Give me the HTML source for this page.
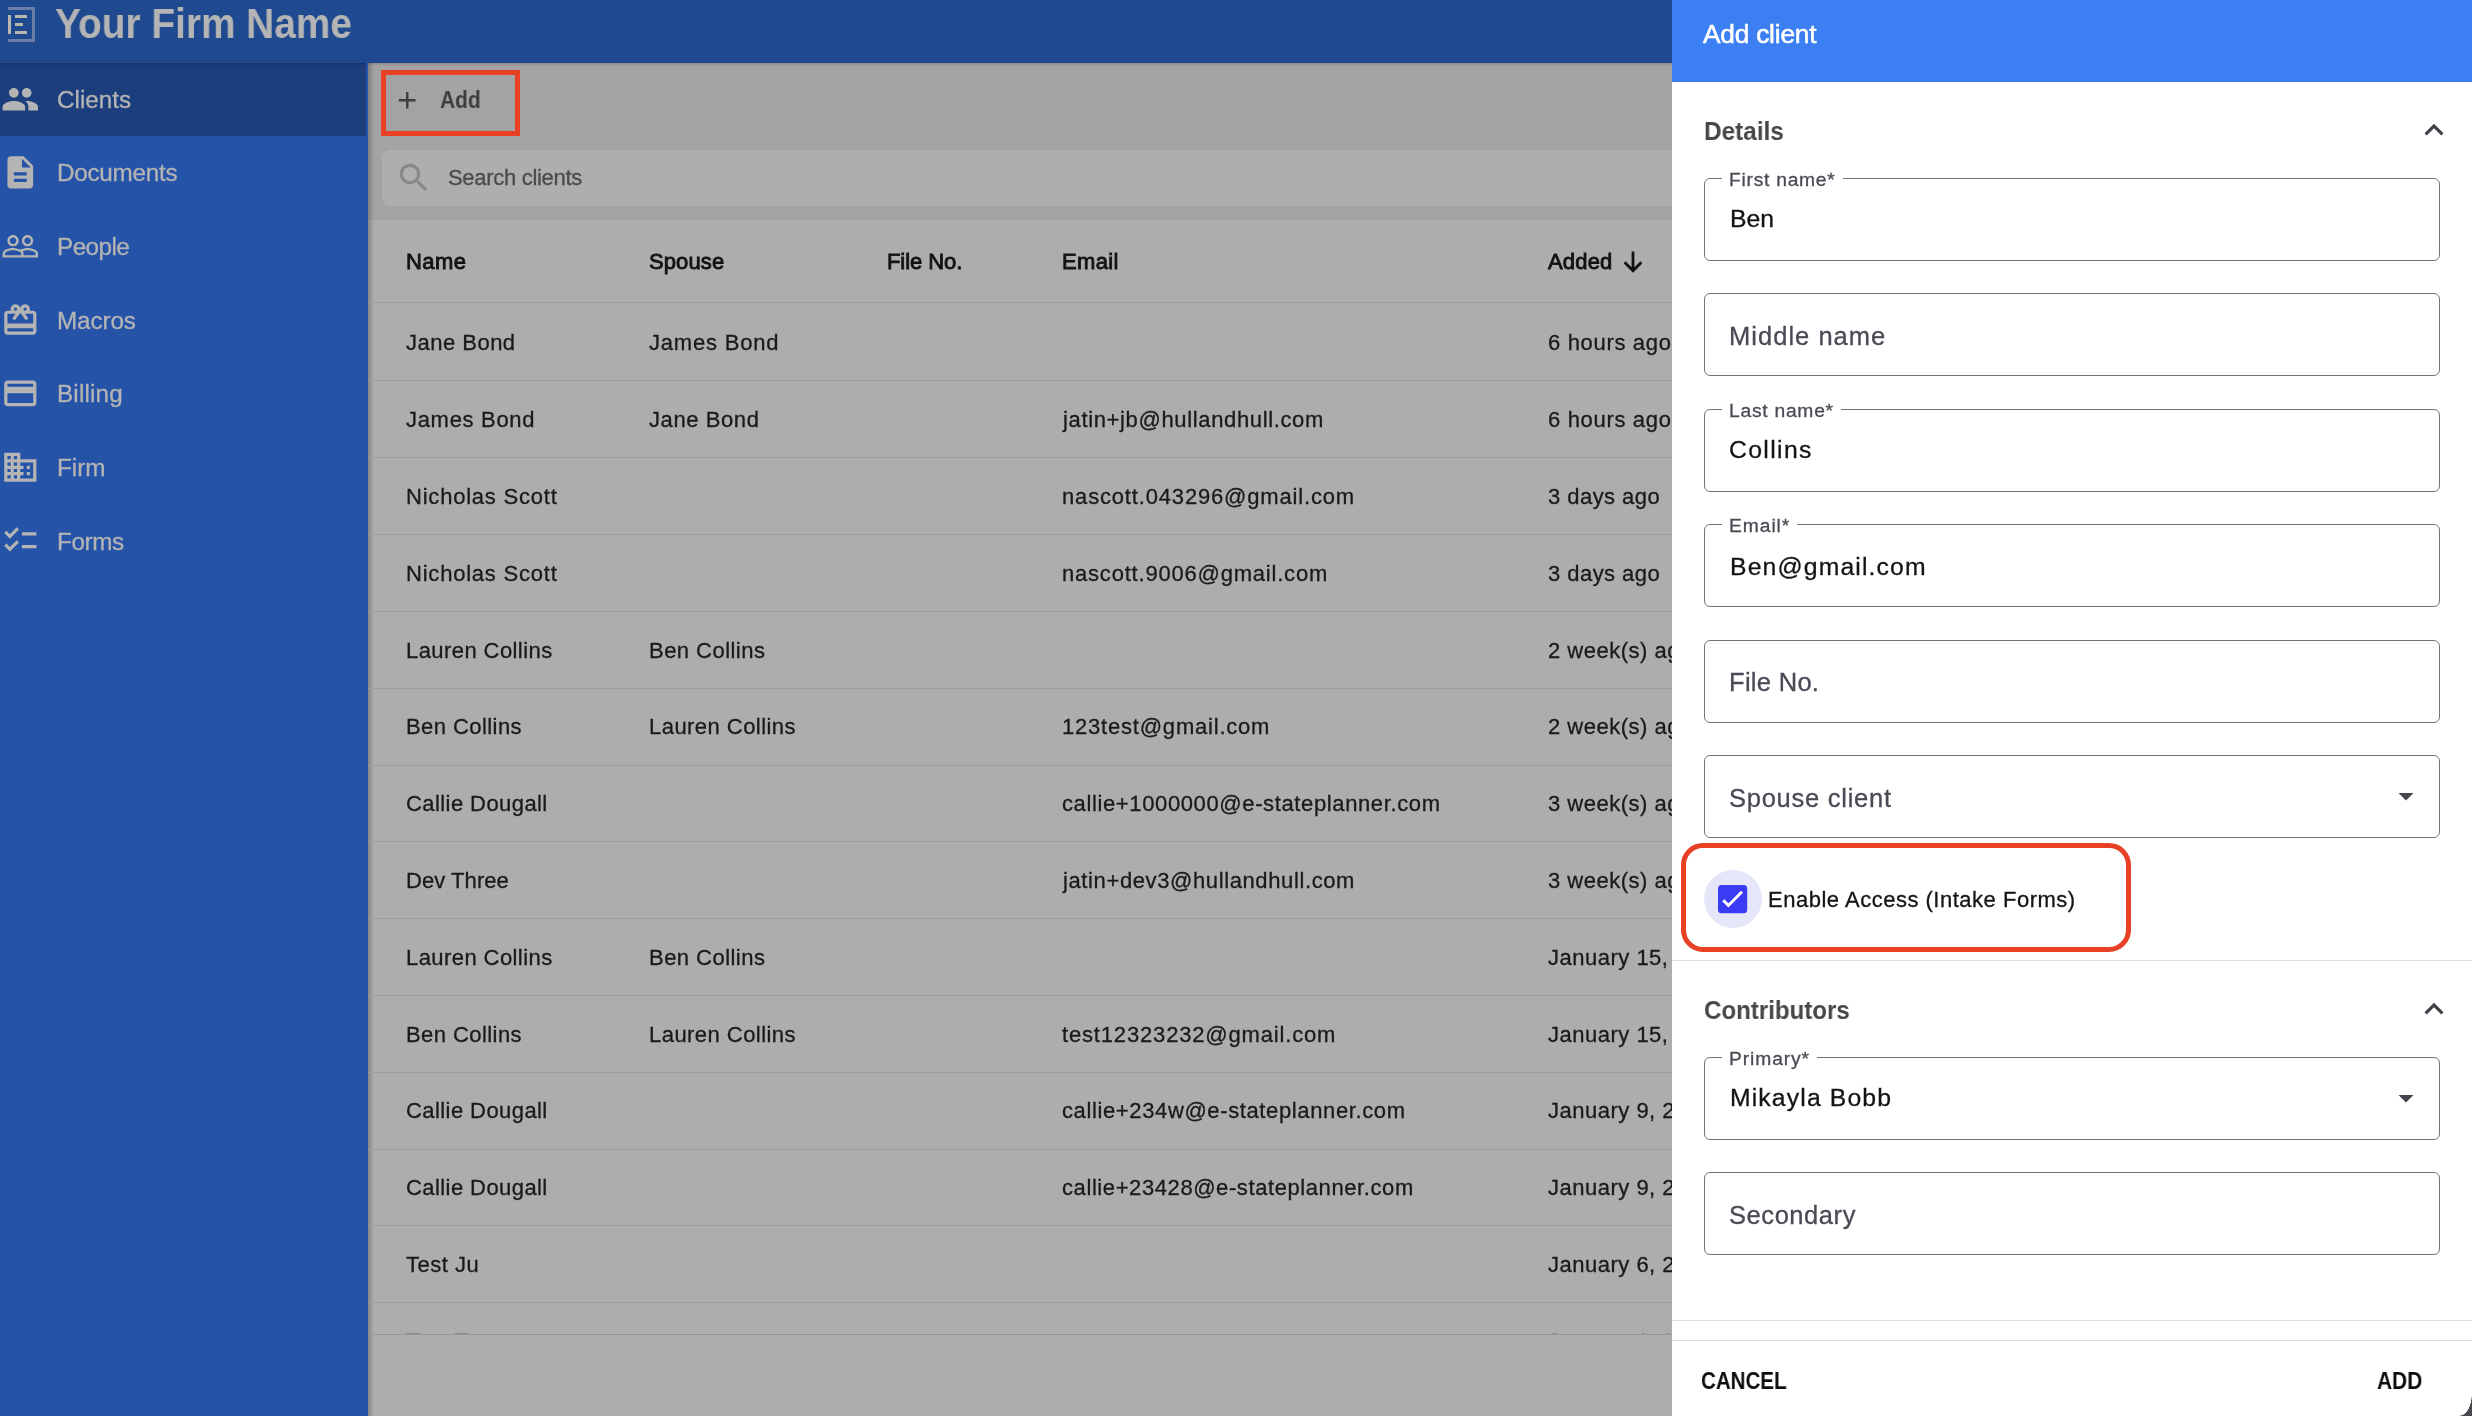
<!DOCTYPE html>
<html><head><meta charset="utf-8">
<style>
*{box-sizing:border-box;margin:0;padding:0}
html,body{width:2472px;height:1416px;overflow:hidden;background:#adadad;font-family:"Liberation Sans",sans-serif}
.a{position:absolute}
.t{position:absolute;white-space:nowrap;line-height:1;will-change:transform}
svg{position:absolute;display:block}
.fld{position:absolute;left:1704px;width:736px;height:83px;border:1px solid #76757f;border-radius:6px}
.gap{position:absolute;height:3px;background:#fff}
.rl{position:absolute;left:368px;width:1304px;height:1px;background:#9d9d9d}
</style></head><body>

<div class="a" style="left:0;top:0;width:1672px;height:63px;background:#1f4a8f"></div>
<div class="a" style="left:0;top:63px;width:368px;height:1353px;background:#2553a8"></div>
<div class="a" style="left:0;top:63px;width:368px;height:73px;background:#1c3e7d"></div>
<div class="a" style="left:368px;top:63px;width:1304px;height:157px;background:#a3a3a3"></div>
<div class="a" style="left:382px;top:150px;width:1290px;height:56px;background:#aeaeae;border-radius:8px 0 0 8px"></div>
<div class="a" style="left:368px;top:63px;width:6px;height:1353px;background:linear-gradient(to right,rgba(0,0,0,0.22),rgba(0,0,0,0))"></div>
<div class="a" style="left:368px;top:63px;width:1304px;height:3px;background:linear-gradient(to bottom,rgba(0,0,0,0.15),rgba(0,0,0,0))"></div>
<div class="a" style="left:0;top:63px;width:368px;height:3px;background:linear-gradient(to bottom,rgba(0,0,0,0.18),rgba(0,0,0,0))"></div>
<div class="a" style="left:366px;top:63px;width:2px;height:1353px;background:#2553a8"></div>
<div class="a" style="left:8px;top:7px;width:27px;height:3px;background:#6b7ea6"></div>
<div class="a" style="left:32px;top:7px;width:3px;height:35px;background:#6b7ea6"></div>
<div class="a" style="left:8px;top:39px;width:27px;height:3px;background:#6b7ea6"></div>
<div class="a" style="left:8px;top:15px;width:3px;height:19px;background:#b9b6b0"></div>
<div class="a" style="left:15px;top:15px;width:12px;height:3px;background:#b9b6b0"></div>
<div class="a" style="left:15px;top:23px;width:8px;height:3px;background:#b9b6b0"></div>
<div class="a" style="left:15px;top:31px;width:12px;height:3px;background:#b9b6b0"></div>
<div class="t" style="left:55.00px;top:2.30px;font-size:43.0px;font-weight:bold;color:#b4b4b4;letter-spacing:0.000px;transform:scaleX(0.9027);transform-origin:0px 0;">Your Firm Name</div>
<svg style="left:1.40px;top:79.55px" width="38.60" height="38.60" viewBox="0 0 24 24"><path fill="#b4b4b4" d="M16 11c1.66 0 2.99-1.34 2.99-3S17.66 5 16 5c-1.66 0-3 1.34-3 3s1.34 3 3 3zm-8 0c1.66 0 2.99-1.34 2.99-3S9.66 5 8 5C6.34 5 5 6.34 5 8s1.34 3 3 3zm0 2c-2.33 0-7 1.17-7 3.5V19h14v-2.5c0-2.33-4.67-3.5-7-3.5zm8 0c-.29 0-.62.02-.97.05 1.16.84 1.97 1.97 1.97 3.45V19h6v-2.5c0-2.33-4.670-3.5-7-3.5z"/></svg>
<div class="t" style="left:57.00px;top:87.67px;font-size:24.25px;color:#b4b4b4;letter-spacing:0.000px;-webkit-text-stroke:0.3px #b4b4b4;">Clients</div>
<svg style="left:1.40px;top:153.20px" width="38.60" height="38.60" viewBox="0 0 24 24"><path fill="#b4b4b4" d="M14 2H6c-1.1 0-1.99.9-1.99 2L4 20c0 1.1.89 2 1.99 2H18c1.1 0 2-.9 2-2V8l-6-6zm2 16H8v-2h8v2zm0-4H8v-2h8v2zm-3-5V3.5L18.5 9H13z"/></svg>
<div class="t" style="left:57.00px;top:161.32px;font-size:24.25px;color:#b4b4b4;letter-spacing:-0.250px;-webkit-text-stroke:0.3px #b4b4b4;">Documents</div>
<svg style="left:1.40px;top:226.85px" width="38.60" height="38.60" viewBox="0 0 24 24"><path fill="#b4b4b4" d="M16.5 13c-1.2 0-3.07.34-4.5 1-1.43-.67-3.3-1-4.5-1C5.33 13 1 14.08 1 16.25V19h22v-2.75c0-2.17-4.33-3.25-6.5-3.25zm-4 4.5h-10v-1.25c0-.54 2.560-1.75 5-1.75s5 1.21 5 1.75v1.25zm9 0H14v-1.25c0-.46-.2-.86-.52-1.22.88-.3 1.96-.53 3.02-.53 2.44 0 5 1.21 5 1.75v1.25zM7.5 12c1.93 0 3.5-1.57 3.5-3.5S9.43 5 7.5 5 4 6.57 4 8.5 5.57 12 7.5 12zm0-5.5c1.1 0 2 .9 2 2s-.9 2-2 2-2-.9-2-2 .9-2 2-2zm9 5.5c1.93 0 3.5-1.57 3.5-3.5S18.43 5 16.5 5 13 6.57 13 8.5s1.57 3.5 3.5 3.5zm0-5.5c1.1 0 2 .9 2 2s-.9 2-2 2-2-.9-2-2 .9-2 2-2z"/></svg>
<div class="t" style="left:57.00px;top:234.97px;font-size:24.25px;color:#b4b4b4;letter-spacing:-0.540px;-webkit-text-stroke:0.3px #b4b4b4;">People</div>
<svg style="left:1.40px;top:300.50px" width="38.60" height="38.60" viewBox="0 0 24 24"><path fill="#b4b4b4" d="M20 6h-2.18c.11-.31.18-.65.18-1 0-1.66-1.34-3-3-3-1.05 0-1.96.54-2.5 1.35l-.5.67-.5-.68C10.96 2.54 10.05 2 9 2 7.34 2 6 3.34 6 5c0 .35.07.69.18 1H4c-1.11 0-1.99.89-1.99 2L2 19c0 1.11.89 2 2 2h16c1.11 0 2-.89 2-2V8c0-1.11-.89-2-2-2zm-5-2c.55 0 1 .45 1 1s-.45 1-1 1-1-.45-1-1 .45-1 1-1zM9 4c.55 0 1 .45 1 1s-.45 1-1 1-1-.45-1-1 .45-1 1-1zm11 15H4v-2h16v2zm0-5H4V8h5.08L7 10.83 8.62 12 11 8.76l1-1.36 1 1.36L15.38 12 17 10.83 14.92 8H20v6z"/></svg>
<div class="t" style="left:57.00px;top:308.62px;font-size:24.25px;color:#b4b4b4;letter-spacing:-0.100px;-webkit-text-stroke:0.3px #b4b4b4;">Macros</div>
<svg style="left:1.40px;top:374.15px" width="38.60" height="38.60" viewBox="0 0 24 24"><path fill="#b4b4b4" d="M20 4H4c-1.11 0-1.99.89-1.99 2L2 18c0 1.11.89 2 2 2h16c1.11 0 2-.89 2-2V6c0-1.11-.89-2-2-2zm0 14H4v-6h16v6zm0-10H4V6h16v2z"/></svg>
<div class="t" style="left:57.00px;top:382.27px;font-size:24.25px;color:#b4b4b4;letter-spacing:0.167px;-webkit-text-stroke:0.3px #b4b4b4;">Billing</div>
<svg style="left:1.40px;top:447.80px" width="38.60" height="38.60" viewBox="0 0 24 24"><path fill="#b4b4b4" d="M12 7V3H2v18h20V7H12zM6 19H4v-2h2v2zm0-4H4v-2h2v2zm0-4H4V9h2v2zm0-4H4V5h2v2zm4 12H8v-2h2v2zm0-4H8v-2h2v2zm0-4H8V9h2v2zm0-4H8V5h2v2zm10 12h-8v-2h2v-2h-2v-2h2v-2h-2V9h8v10zm-2-8h-2v2h2v-2zm0 4h-2v2h2v-2z"/></svg>
<div class="t" style="left:57.00px;top:455.92px;font-size:24.25px;color:#b4b4b4;letter-spacing:-0.033px;-webkit-text-stroke:0.3px #b4b4b4;">Firm</div>
<svg style="left:1.40px;top:521.45px" width="38.60" height="38.60" viewBox="0 0 24 24"><path fill="#b4b4b4" d="M22 7h-9v2h9V7zm0 8h-9v2h9v-2zM5.540 11L2 7.46l1.41-1.41 2.12 2.12 4.24-4.24 1.41 1.41L5.54 11zm0 8L2 15.46l1.41-1.41 2.12 2.12 4.24-4.24 1.41 1.41L5.54 19z"/></svg>
<div class="t" style="left:57.00px;top:529.57px;font-size:24.25px;color:#b4b4b4;letter-spacing:-0.375px;-webkit-text-stroke:0.3px #b4b4b4;">Forms</div>
<svg style="left:392.6px;top:86.4px" width="28.5" height="28.5" viewBox="0 0 24 24"><path fill="#3d3d3d" d="M19 13h-6v6h-2v-6H5v-2h6V5h2v6h6v2z"/></svg>
<div class="t" style="left:440.00px;top:89.12px;font-size:23.25px;font-weight:bold;color:#3d3d3d;letter-spacing:0.000px;transform:scaleX(0.9000);transform-origin:0px 0;">Add</div>
<svg style="left:394.7px;top:158.9px" width="37.9" height="37.9" viewBox="0 0 24 24"><path fill="#888888" d="M15.5 14h-.79l-.28-.27C15.41 12.590 16 11.11 16 9.5 16 5.91 13.09 3 9.5 3S3 5.91 3 9.5 5.91 16 9.5 16c1.61 0 3.09-.59 4.23-1.57l.27.28v.79l5 4.99L20.49 19l-4.99-5zm-6 0C7.01 14 5 11.99 5 9.5S7.010 5 9.5 5 14 7.01 14 9.5 11.99 14 9.5 14z"/></svg>
<div class="t" style="left:448.40px;top:167.28px;font-size:22.0px;color:#4b4b4b;letter-spacing:-0.300px;-webkit-text-stroke:0.3px #4b4b4b;">Search clients</div>
<div class="t" style="left:405.80px;top:251.18px;font-size:22.0px;color:#121212;letter-spacing:0.400px;-webkit-text-stroke:0.85px #121212;">Name</div>
<div class="t" style="left:649.00px;top:251.18px;font-size:22.0px;color:#121212;letter-spacing:0.100px;-webkit-text-stroke:0.85px #121212;">Spouse</div>
<div class="t" style="left:886.90px;top:251.18px;font-size:22.0px;color:#121212;letter-spacing:-0.071px;-webkit-text-stroke:0.85px #121212;">File No.</div>
<div class="t" style="left:1061.70px;top:251.18px;font-size:22.0px;color:#121212;letter-spacing:0.325px;-webkit-text-stroke:0.85px #121212;">Email</div>
<div class="t" style="left:1548.20px;top:251.18px;font-size:22.0px;color:#121212;letter-spacing:0.175px;-webkit-text-stroke:0.85px #121212;">Added</div>
<svg style="left:1610px;top:240px" width="40" height="40" viewBox="1610 240 40 40"><path d="M1633 251.5 V269.5 M1624.6 262.3 L1633 270.7 L1641.4 262.3" fill="none" stroke="#121212" stroke-width="2.8"/></svg>
<div class="rl" style="top:302px"></div>
<div class="a" style="left:368px;top:303px;width:1304px;height:1031px;overflow:hidden">
<div class="t" style="left:38.00px;top:29.18px;font-size:22px;color:#1a1a1a;letter-spacing:0.487px;-webkit-text-stroke:0.3px #1a1a1a;">Jane Bond</div>
<div class="t" style="left:281.00px;top:29.18px;font-size:22px;color:#1a1a1a;letter-spacing:0.800px;-webkit-text-stroke:0.3px #1a1a1a;">James Bond</div>
<div class="t" style="left:1179.60px;top:29.18px;font-size:22px;color:#1a1a1a;letter-spacing:0.670px;-webkit-text-stroke:0.3px #1a1a1a;">6 hours ago</div>
<div class="a" style="left:0;top:77.3px;width:1304px;height:1px;background:#9d9d9d"></div>
<div class="t" style="left:38.00px;top:106.01px;font-size:22px;color:#1a1a1a;letter-spacing:0.689px;-webkit-text-stroke:0.3px #1a1a1a;">James Bond</div>
<div class="t" style="left:281.00px;top:106.01px;font-size:22px;color:#1a1a1a;letter-spacing:0.588px;-webkit-text-stroke:0.3px #1a1a1a;">Jane Bond</div>
<div class="t" style="left:695.00px;top:106.01px;font-size:22px;color:#1a1a1a;letter-spacing:0.643px;-webkit-text-stroke:0.3px #1a1a1a;">jatin+jb@hullandhull.com</div>
<div class="t" style="left:1179.60px;top:106.01px;font-size:22px;color:#1a1a1a;letter-spacing:0.670px;-webkit-text-stroke:0.3px #1a1a1a;">6 hours ago</div>
<div class="a" style="left:0;top:154.1px;width:1304px;height:1px;background:#9d9d9d"></div>
<div class="t" style="left:38.00px;top:182.84px;font-size:22px;color:#1a1a1a;letter-spacing:0.785px;-webkit-text-stroke:0.3px #1a1a1a;">Nicholas Scott</div>
<div class="t" style="left:694.00px;top:182.84px;font-size:22px;color:#1a1a1a;letter-spacing:0.830px;-webkit-text-stroke:0.3px #1a1a1a;">nascott.043296@gmail.com</div>
<div class="t" style="left:1179.60px;top:182.84px;font-size:22px;color:#1a1a1a;letter-spacing:0.456px;-webkit-text-stroke:0.3px #1a1a1a;">3 days ago</div>
<div class="a" style="left:0;top:231.0px;width:1304px;height:1px;background:#9d9d9d"></div>
<div class="t" style="left:38.00px;top:259.67px;font-size:22px;color:#1a1a1a;letter-spacing:0.785px;-webkit-text-stroke:0.3px #1a1a1a;">Nicholas Scott</div>
<div class="t" style="left:694.00px;top:259.67px;font-size:22px;color:#1a1a1a;letter-spacing:0.795px;-webkit-text-stroke:0.3px #1a1a1a;">nascott.9006@gmail.com</div>
<div class="t" style="left:1179.60px;top:259.67px;font-size:22px;color:#1a1a1a;letter-spacing:0.456px;-webkit-text-stroke:0.3px #1a1a1a;">3 days ago</div>
<div class="a" style="left:0;top:307.8px;width:1304px;height:1px;background:#9d9d9d"></div>
<div class="t" style="left:38.00px;top:336.50px;font-size:22px;color:#1a1a1a;letter-spacing:0.423px;-webkit-text-stroke:0.3px #1a1a1a;">Lauren Collins</div>
<div class="t" style="left:281.00px;top:336.50px;font-size:22px;color:#1a1a1a;letter-spacing:0.460px;-webkit-text-stroke:0.3px #1a1a1a;">Ben Collins</div>
<div class="t" style="left:1179.60px;top:336.50px;font-size:22px;color:#1a1a1a;letter-spacing:0.500px;-webkit-text-stroke:0.3px #1a1a1a;">2 week(s) ago</div>
<div class="a" style="left:0;top:384.6px;width:1304px;height:1px;background:#9d9d9d"></div>
<div class="t" style="left:38.00px;top:413.33px;font-size:22px;color:#1a1a1a;letter-spacing:0.430px;-webkit-text-stroke:0.3px #1a1a1a;">Ben Collins</div>
<div class="t" style="left:281.00px;top:413.33px;font-size:22px;color:#1a1a1a;letter-spacing:0.454px;-webkit-text-stroke:0.3px #1a1a1a;">Lauren Collins</div>
<div class="t" style="left:694.00px;top:413.33px;font-size:22px;color:#1a1a1a;letter-spacing:0.794px;-webkit-text-stroke:0.3px #1a1a1a;">123test@gmail.com</div>
<div class="t" style="left:1179.60px;top:413.33px;font-size:22px;color:#1a1a1a;letter-spacing:0.500px;-webkit-text-stroke:0.3px #1a1a1a;">2 week(s) ago</div>
<div class="a" style="left:0;top:461.5px;width:1304px;height:1px;background:#9d9d9d"></div>
<div class="t" style="left:38.00px;top:490.16px;font-size:22px;color:#1a1a1a;letter-spacing:0.423px;-webkit-text-stroke:0.3px #1a1a1a;">Callie Dougall</div>
<div class="t" style="left:694.00px;top:490.16px;font-size:22px;color:#1a1a1a;letter-spacing:0.622px;-webkit-text-stroke:0.3px #1a1a1a;">callie+1000000@e-stateplanner.com</div>
<div class="t" style="left:1179.60px;top:490.16px;font-size:22px;color:#1a1a1a;letter-spacing:0.500px;-webkit-text-stroke:0.3px #1a1a1a;">3 week(s) ago</div>
<div class="a" style="left:0;top:538.3px;width:1304px;height:1px;background:#9d9d9d"></div>
<div class="t" style="left:38.00px;top:566.99px;font-size:22px;color:#1a1a1a;letter-spacing:0.062px;-webkit-text-stroke:0.3px #1a1a1a;">Dev Three</div>
<div class="t" style="left:695.00px;top:566.99px;font-size:22px;color:#1a1a1a;letter-spacing:0.612px;-webkit-text-stroke:0.3px #1a1a1a;">jatin+dev3@hullandhull.com</div>
<div class="t" style="left:1179.60px;top:566.99px;font-size:22px;color:#1a1a1a;letter-spacing:0.500px;-webkit-text-stroke:0.3px #1a1a1a;">3 week(s) ago</div>
<div class="a" style="left:0;top:615.1px;width:1304px;height:1px;background:#9d9d9d"></div>
<div class="t" style="left:38.00px;top:643.82px;font-size:22px;color:#1a1a1a;letter-spacing:0.423px;-webkit-text-stroke:0.3px #1a1a1a;">Lauren Collins</div>
<div class="t" style="left:281.00px;top:643.82px;font-size:22px;color:#1a1a1a;letter-spacing:0.460px;-webkit-text-stroke:0.3px #1a1a1a;">Ben Collins</div>
<div class="t" style="left:1179.60px;top:643.82px;font-size:22px;color:#1a1a1a;letter-spacing:0.500px;-webkit-text-stroke:0.3px #1a1a1a;">January 15, 2025</div>
<div class="a" style="left:0;top:691.9px;width:1304px;height:1px;background:#9d9d9d"></div>
<div class="t" style="left:38.00px;top:720.65px;font-size:22px;color:#1a1a1a;letter-spacing:0.430px;-webkit-text-stroke:0.3px #1a1a1a;">Ben Collins</div>
<div class="t" style="left:281.00px;top:720.65px;font-size:22px;color:#1a1a1a;letter-spacing:0.454px;-webkit-text-stroke:0.3px #1a1a1a;">Lauren Collins</div>
<div class="t" style="left:694.00px;top:720.65px;font-size:22px;color:#1a1a1a;letter-spacing:0.833px;-webkit-text-stroke:0.3px #1a1a1a;">test12323232@gmail.com</div>
<div class="t" style="left:1179.60px;top:720.65px;font-size:22px;color:#1a1a1a;letter-spacing:0.500px;-webkit-text-stroke:0.3px #1a1a1a;">January 15, 2025</div>
<div class="a" style="left:0;top:768.8px;width:1304px;height:1px;background:#9d9d9d"></div>
<div class="t" style="left:38.00px;top:797.48px;font-size:22px;color:#1a1a1a;letter-spacing:0.423px;-webkit-text-stroke:0.3px #1a1a1a;">Callie Dougall</div>
<div class="t" style="left:694.00px;top:797.48px;font-size:22px;color:#1a1a1a;letter-spacing:0.621px;-webkit-text-stroke:0.3px #1a1a1a;">callie+234w@e-stateplanner.com</div>
<div class="t" style="left:1179.60px;top:797.48px;font-size:22px;color:#1a1a1a;letter-spacing:0.500px;-webkit-text-stroke:0.3px #1a1a1a;">January 9, 2025</div>
<div class="a" style="left:0;top:845.6px;width:1304px;height:1px;background:#9d9d9d"></div>
<div class="t" style="left:38.00px;top:874.31px;font-size:22px;color:#1a1a1a;letter-spacing:0.423px;-webkit-text-stroke:0.3px #1a1a1a;">Callie Dougall</div>
<div class="t" style="left:694.00px;top:874.31px;font-size:22px;color:#1a1a1a;letter-spacing:0.587px;-webkit-text-stroke:0.3px #1a1a1a;">callie+23428@e-stateplanner.com</div>
<div class="t" style="left:1179.60px;top:874.31px;font-size:22px;color:#1a1a1a;letter-spacing:0.500px;-webkit-text-stroke:0.3px #1a1a1a;">January 9, 2025</div>
<div class="a" style="left:0;top:922.4px;width:1304px;height:1px;background:#9d9d9d"></div>
<div class="t" style="left:38.00px;top:951.14px;font-size:22px;color:#1a1a1a;letter-spacing:0.500px;-webkit-text-stroke:0.3px #1a1a1a;">Test Ju</div>
<div class="t" style="left:1179.60px;top:951.14px;font-size:22px;color:#1a1a1a;letter-spacing:0.500px;-webkit-text-stroke:0.3px #1a1a1a;">January 6, 2025</div>
<div class="a" style="left:0;top:999.3px;width:1304px;height:1px;background:#9d9d9d"></div>
<div class="t" style="left:38.00px;top:1027.97px;font-size:22px;color:#1a1a1a;letter-spacing:0.500px;-webkit-text-stroke:0.3px #1a1a1a;">Test Te</div>
<div class="t" style="left:1179.60px;top:1027.97px;font-size:22px;color:#1a1a1a;letter-spacing:0.500px;-webkit-text-stroke:0.3px #1a1a1a;">January 1, 2025</div>
</div>
<div class="a" style="left:368px;top:1334px;width:1304px;height:1px;background:#979797"></div>
<div class="a" style="left:1672px;top:0;width:800px;height:1416px;background:#fff"></div>
<div class="a" style="left:1672px;top:0;width:800px;height:82px;background:#3b7ff2"></div>
<div class="t" style="left:1703.30px;top:21.38px;font-size:26.25px;color:#ffffff;letter-spacing:-0.200px;-webkit-text-stroke:0.55px #ffffff;">Add client</div>
<div class="t" style="left:1704.30px;top:117.58px;font-size:26.25px;font-weight:bold;color:#474747;letter-spacing:0.000px;transform:scaleX(0.9267);transform-origin:0px 0;">Details</div>
<div class="t" style="left:1703.80px;top:996.58px;font-size:26.25px;font-weight:bold;color:#474747;letter-spacing:0.000px;transform:scaleX(0.9176);transform-origin:0px 0;">Contributors</div>
<svg style="left:2414.5px;top:111px" width="38" height="38" viewBox="0 0 24 24"><path fill="#3f3f48" d="M12 8l-6 6 1.41 1.41L12 10.83l4.59 4.58L18 14z"/></svg>
<svg style="left:2414.5px;top:990px" width="38" height="38" viewBox="0 0 24 24"><path fill="#3f3f48" d="M12 8l-6 6 1.41 1.41L12 10.83l4.59 4.58L18 14z"/></svg>
<div class="fld" style="top:178px"></div>
<div class="fld" style="top:293px"></div>
<div class="fld" style="top:409px"></div>
<div class="fld" style="top:524px"></div>
<div class="fld" style="top:640px"></div>
<div class="fld" style="top:755px"></div>
<div class="fld" style="top:1057px"></div>
<div class="fld" style="top:1172px"></div>
<div class="gap" style="left:1722px;top:177px;width:121px"></div>
<div class="t" style="left:1729.00px;top:170.10px;font-size:19.25px;color:#4a4a55;letter-spacing:0.740px;-webkit-text-stroke:0.3px #4a4a55;">First name*</div>
<div class="gap" style="left:1722px;top:408px;width:119px"></div>
<div class="t" style="left:1729.00px;top:401.10px;font-size:19.25px;color:#4a4a55;letter-spacing:0.744px;-webkit-text-stroke:0.3px #4a4a55;">Last name*</div>
<div class="gap" style="left:1722px;top:523px;width:75px"></div>
<div class="t" style="left:1729.00px;top:516.10px;font-size:19.25px;color:#4a4a55;letter-spacing:0.940px;-webkit-text-stroke:0.3px #4a4a55;">Email*</div>
<div class="gap" style="left:1722px;top:1056px;width:95px"></div>
<div class="t" style="left:1729.00px;top:1049.10px;font-size:19.25px;color:#4a4a55;letter-spacing:0.900px;-webkit-text-stroke:0.3px #4a4a55;">Primary*</div>
<div class="t" style="left:1730.00px;top:207.35px;font-size:24.75px;color:#141414;letter-spacing:0.050px;-webkit-text-stroke:0.3px #141414;">Ben</div>
<div class="t" style="left:1728.80px;top:438.45px;font-size:24.75px;color:#141414;letter-spacing:1.367px;-webkit-text-stroke:0.3px #141414;">Collins</div>
<div class="t" style="left:1729.90px;top:554.85px;font-size:24.75px;color:#141414;letter-spacing:1.142px;-webkit-text-stroke:0.3px #141414;">Ben@gmail.com</div>
<div class="t" style="left:1729.80px;top:1086.45px;font-size:24.75px;color:#141414;letter-spacing:1.127px;-webkit-text-stroke:0.3px #141414;">Mikayla Bobb</div>
<div class="t" style="left:1728.60px;top:323.81px;font-size:25.5px;color:#4a4a55;letter-spacing:1.030px;-webkit-text-stroke:0.3px #4a4a55;">Middle name</div>
<div class="t" style="left:1729.30px;top:670.31px;font-size:25.5px;color:#4a4a55;letter-spacing:0.300px;-webkit-text-stroke:0.3px #4a4a55;">File No.</div>
<div class="t" style="left:1728.80px;top:785.61px;font-size:25.5px;color:#4a4a55;letter-spacing:0.742px;-webkit-text-stroke:0.3px #4a4a55;">Spouse client</div>
<div class="t" style="left:1728.90px;top:1203.01px;font-size:25.5px;color:#4a4a55;letter-spacing:0.562px;-webkit-text-stroke:0.3px #4a4a55;">Secondary</div>
<svg style="left:2388px;top:777.9px" width="36" height="36" viewBox="0 0 24 24"><path fill="#44444e" d="M7 10l5 5 5-5z"/></svg>
<svg style="left:2388px;top:1079.9px" width="36" height="36" viewBox="0 0 24 24"><path fill="#44444e" d="M7 10l5 5 5-5z"/></svg>
<div class="a" style="left:1704px;top:870px;width:58px;height:58px;border-radius:50%;background:#e6e6fa"></div>
<svg style="left:1700px;top:860px" width="70" height="70" viewBox="1700 860 70 70"><rect x="1718" y="885" width="29.2" height="28.2" rx="3.5" fill="#3b3bf4"/><path d="M1723.2 900.2 L1728.4 905.4 L1742 891.7" fill="none" stroke="#fff" stroke-width="2.9"/></svg>
<div class="t" style="left:1768.40px;top:888.68px;font-size:22.0px;color:#141414;letter-spacing:0.507px;-webkit-text-stroke:0.3px #141414;">Enable Access (Intake Forms)</div>
<div class="a" style="left:1672px;top:960px;width:800px;height:1px;background:#dedede"></div>
<div class="a" style="left:1672px;top:1320px;width:800px;height:1px;background:#dedede"></div>
<div class="a" style="left:1672px;top:1340px;width:800px;height:1px;background:#dedede"></div>
<div class="t" style="left:1701.10px;top:1368.60px;font-size:23.75px;font-weight:bold;color:#0e0e0e;letter-spacing:0.000px;transform:scaleX(0.8646);transform-origin:0px 0;">CANCEL</div>
<div class="t" style="left:2376.80px;top:1368.58px;font-size:24.0px;font-weight:bold;color:#0e0e0e;letter-spacing:0.000px;transform:scaleX(0.8692);transform-origin:0px 0;">ADD</div>
<div class="a" style="left:381px;top:70px;width:139px;height:66px;border:5px solid #e84024"></div>
<div class="a" style="left:1681px;top:843px;width:450px;height:109px;border:5px solid #e84024;border-radius:22px"></div>
<div class="a" style="left:2460px;top:1394px;width:12px;height:22px;background:radial-gradient(ellipse 12px 22px at 0 0, transparent 96%, #4a4a4f 100%)"></div>
</body></html>
